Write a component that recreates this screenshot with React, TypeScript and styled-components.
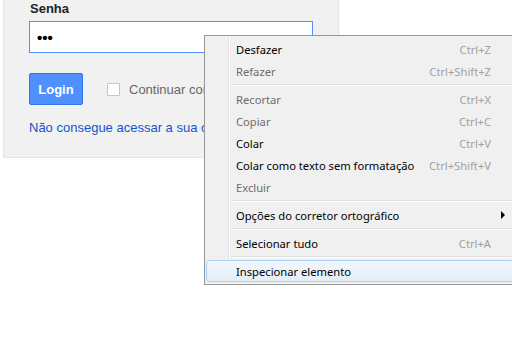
import React from "react";
import styled, { createGlobalStyle } from "styled-components";

const Global = createGlobalStyle`
  html, body { margin: 0; padding: 0; background: #fff; overflow: hidden; }
  body { width: 512px; height: 340px; position: relative; font-family: Arial, "Liberation Sans", sans-serif; }
`;

const Panel = styled.div`
  margin-left: 3px;
  width: 336px;
  height: 158px;
  background: #f1f1f1;
  border: 1px solid #e5e5e5;
  border-top: none;
  padding: 1px 0 0 25px;
  box-sizing: border-box;
  display: flex;
  flex-direction: column;
  font-family: "Liberation Sans", Arial, sans-serif;
`;

const Label = styled.div`
  font-size: 13px;
  font-weight: bold;
  color: #222;
  line-height: 16px;
  margin-left: 1px;
`;

const Input = styled.div`
  margin-top: 4px;
  width: 284px;
  height: 32px;
  box-sizing: border-box;
  border: 1px solid #4d90fe;
  background: #fff;
  display: flex;
  align-items: center;
  padding-left: 7px;
  font-size: 15px;
  font-weight: bold;
  letter-spacing: 0px;
  color: #000;
`;

const Row = styled.div`
  margin-top: 20px;
  display: flex;
  align-items: center;
  height: 32px;
`;

const Button = styled.div`
  width: 54px;
  height: 32px;
  box-sizing: border-box;
  background: #4d90fe;
  border: 1px solid #3079ed;
  border-radius: 2px;
  color: #fff;
  font-weight: bold;
  font-size: 13px;
  display: flex;
  align-items: center;
  justify-content: center;
`;

const Check = styled.div`
  margin-left: 24px;
  width: 13px;
  height: 13px;
  box-sizing: border-box;
  border: 1px solid #c6c6c6;
  background: #fff;
  border-radius: 1px;
`;

const CheckText = styled.span`
  margin-left: 9px;
  font-size: 13px;
  color: #666;
  white-space: nowrap;
`;

const Link = styled.div`
  margin-top: 15px;
  font-size: 13px;
  line-height: 16px;
  color: #15c;
  white-space: nowrap;
`;

const Menu = styled.div`
  position: absolute;
  left: 204px;
  top: 35px;
  width: 312px;
  box-sizing: border-box;
  border: 1px solid #979797;
  background: #f0f0f0;
  padding: 2px 1px;
  font-family: "Noto Sans", sans-serif;
  font-size: 11.2px;
  &::before {
    content: "";
    position: absolute;
    left: 23px;
    top: 0;
    bottom: 0;
    width: 1px;
    background: #e2e3e3;
    border-right: 1px solid #fff;
  }
`;

const Item = styled.div<{ $disabled?: boolean; $hover?: boolean }>`
  position: relative;
  height: 22px;
  box-sizing: border-box;
  display: flex;
  align-items: center;
  justify-content: space-between;
  padding: 0 22px 0 29px;
  color: ${(p) => (p.$disabled ? "#6d6d6d" : "#000")};
  border: 1px solid ${(p) => (p.$hover ? "#aecff7" : "transparent")};
  border-radius: 3px;
  background: ${(p) => (p.$hover ? "linear-gradient(#f2f7fd, #e4edf8)" : "transparent")};
  white-space: nowrap;
`;

const Shortcut = styled.span`
  color: #a0a0a0;
  margin-left: 12px;
`;

const Arrow = styled.span`
  width: 0;
  height: 0;
  border-top: 4px solid transparent;
  border-bottom: 4px solid transparent;
  border-left: 4px solid #000;
  margin-right: -14px;
`;

const Sep = styled.div`
  margin: 2px 0 2px 25px;
  border-top: 1px solid #dfdfdf;
  border-bottom: 1px solid #fff;
`;

export default function App() {
  return (
    <>
      <Global />
      <Panel>
        <Label>Senha</Label>
        <Input>•••</Input>
        <Row>
          <Button>Login</Button>
          <Check />
          <CheckText>Continuar conectado</CheckText>
        </Row>
        <Link>Não consegue acessar a sua conta?</Link>
      </Panel>
      <Menu>
        <Item>Desfazer<Shortcut>Ctrl+Z</Shortcut></Item>
        <Item $disabled>Refazer<Shortcut>Ctrl+Shift+Z</Shortcut></Item>
        <Sep />
        <Item $disabled>Recortar<Shortcut>Ctrl+X</Shortcut></Item>
        <Item $disabled>Copiar<Shortcut>Ctrl+C</Shortcut></Item>
        <Item>Colar<Shortcut>Ctrl+V</Shortcut></Item>
        <Item>Colar como texto sem formatação<Shortcut>Ctrl+Shift+V</Shortcut></Item>
        <Item $disabled>Excluir</Item>
        <Sep />
        <Item>Opções do corretor ortográfico<Arrow /></Item>
        <Sep />
        <Item>Selecionar tudo<Shortcut>Ctrl+A</Shortcut></Item>
        <Sep />
        <Item $hover>Inspecionar elemento</Item>
      </Menu>
    </>
  );
}
